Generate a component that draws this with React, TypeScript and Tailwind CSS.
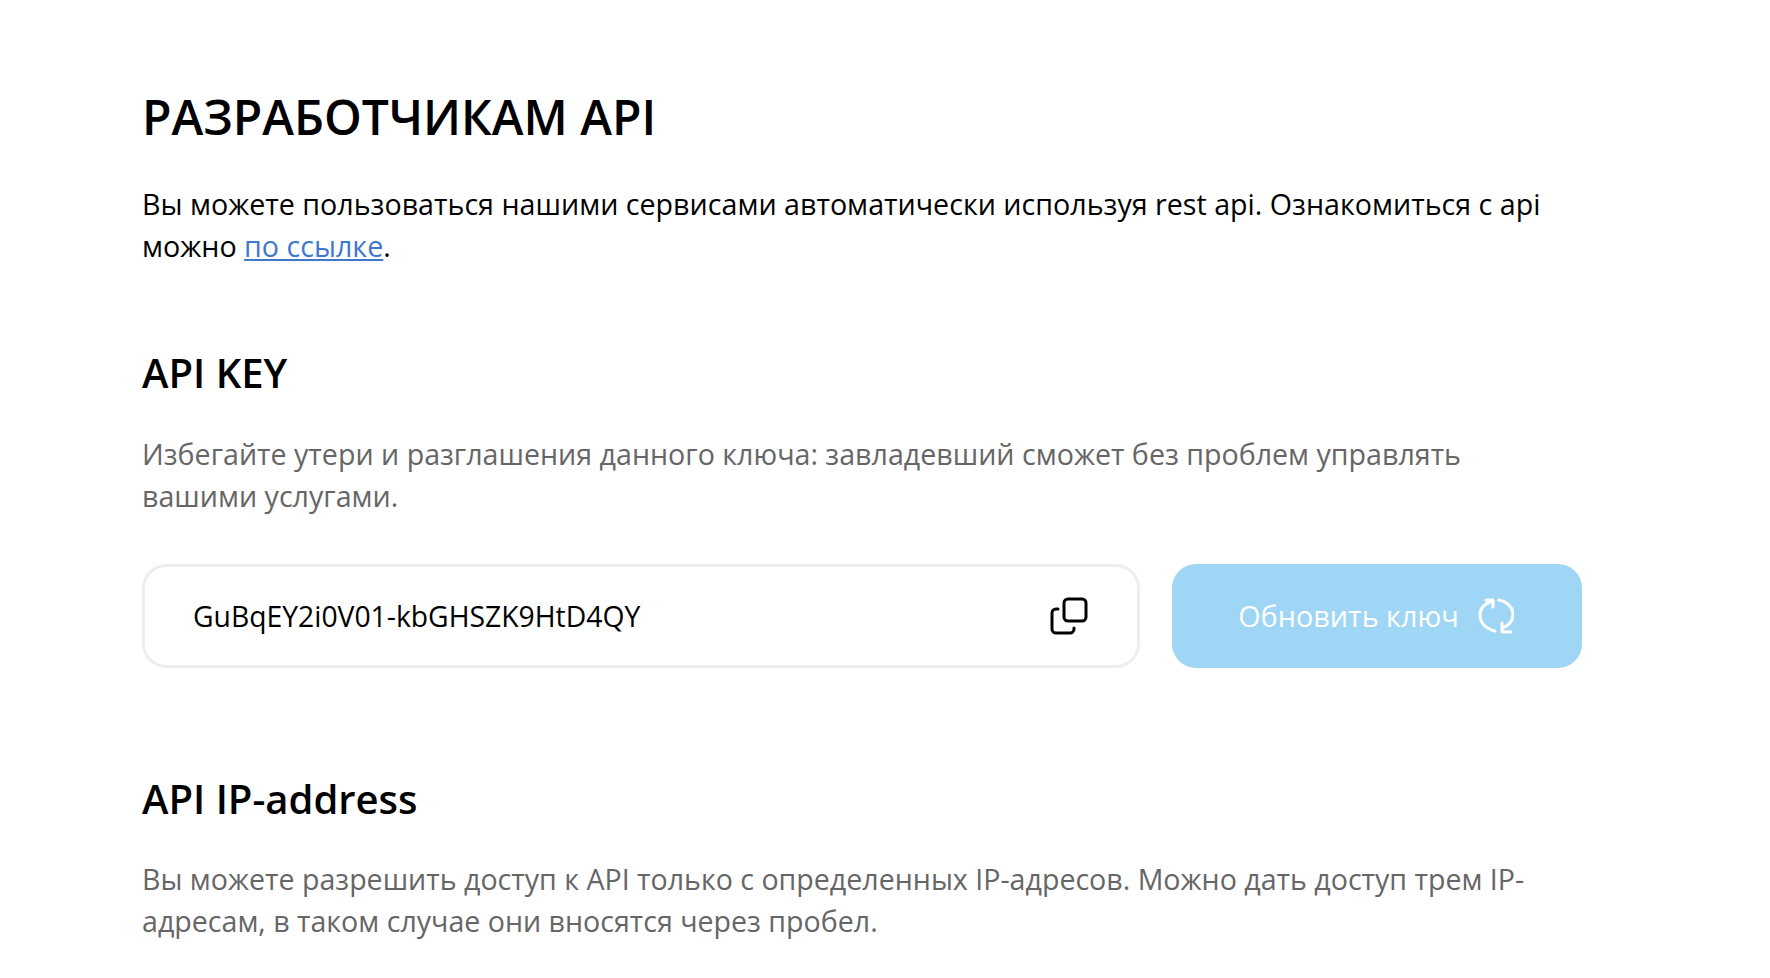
export default function App() {
  return (
    <div className="h-[978px] overflow-hidden bg-white pl-[142px] pt-[84px] font-['Open_Sans',sans-serif] text-black">
      <div className="w-[1440px]">
        <h1 className="text-[48px] leading-[66px] font-semibold">РАЗРАБОТЧИКАМ API</h1>
        <p className="mt-[33px] text-[28.65px] leading-[42px]">
          Вы можете пользоваться нашими сервисами автоматически используя rest api. Ознакомиться с api можно{" "}
          <a className="text-[#3f78cf] underline">по ссылке</a>.
        </p>
        <h2 className="mt-[78px] text-[40px] leading-[56px] font-semibold">API KEY</h2>
        <p className="mt-[32px] text-[28.62px] leading-[42px] text-[#666666]">
          Избегайте утери и разглашения данного ключа: завладевший сможет без проблем управлять вашими услугами.
        </p>
        <div className="mt-[47px] flex gap-[32px]">
          <div className="flex h-[104px] w-[998px] items-center justify-between rounded-[24px] border-[3px] border-[#eeeeee] pl-[48px] pr-[49px]">
            <span className="text-[28.3px]">GuBqEY2i0V01-kbGHSZK9HtD4QY</span>
            <svg width="38" height="38" viewBox="0 0 38 38" fill="none" stroke="black" strokeWidth="3" strokeLinecap="round" strokeLinejoin="round">
              <rect x="14" y="2" width="22" height="22" rx="4" />
              <path d="M8 12H6a4 4 0 0 0-4 4v16a4 4 0 0 0 4 4h14a4 4 0 0 0 4-4v-1" />
            </svg>
          </div>
          <button className="flex h-[104px] w-[410px] items-center justify-center gap-[19px] rounded-[24px] bg-[#9fd6f5] pr-[2px] text-[28.8px] font-medium text-white">
            Обновить ключ
            <svg width="36" height="38" viewBox="0 0 36 38" fill="none" stroke="white" strokeWidth="3" strokeLinecap="round" strokeLinejoin="round">
              <path d="M14 4C6 7 2 12 2 18c0 8 6 14 15 16" />
              <path d="M8 3h7v7" />
              <path d="M21 3c9 2 14 8 14 15 0 6-4 10-10 13" />
              <path d="M24 26v9h9" />
            </svg>
          </button>
        </div>
        <h2 className="mt-[103px] text-[40px] leading-[56px] font-semibold">API IP-address</h2>
        <p className="mt-[31px] text-[28.58px] leading-[42px] text-[#666666]">
          Вы можете разрешить доступ к API только с определенных IP-адресов. Можно дать доступ трем IP-адресам, в таком случае они вносятся через пробел.
        </p>
      </div>
    </div>
  );
}
